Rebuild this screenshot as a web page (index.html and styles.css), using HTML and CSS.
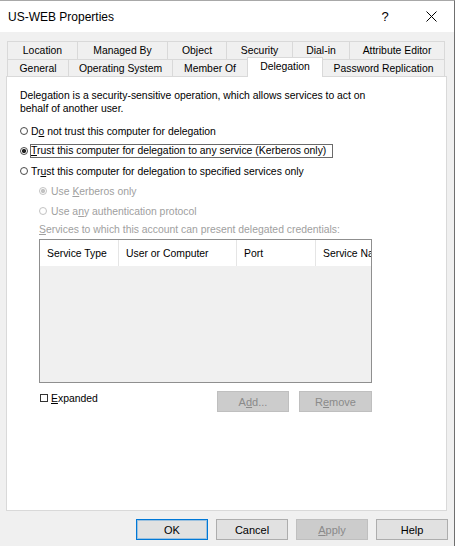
FILE: index.html
```html
<!DOCTYPE html>
<html>
<head>
<meta charset="utf-8">
<link rel="stylesheet" href="styles.css">
</head>
<body>
<div class="window">
  <div class="titlebar">
    <span class="title">US-WEB Properties</span>
    <span class="tb-btn help">?</span>
    <span class="tb-btn close"><svg width="11" height="11" viewBox="0 0 11 11"><path d="M0.5 0.5L10.5 10.5M10.5 0.5L0.5 10.5" stroke="#000" stroke-width="1" fill="none"/></svg></span>
  </div>
  <div class="tabs">
    <div class="tab-row row1">
      <div class="tab">Location</div>
      <div class="tab">Managed By</div>
      <div class="tab">Object</div>
      <div class="tab">Security</div>
      <div class="tab">Dial-in</div>
      <div class="tab">Attribute Editor</div>
    </div>
    <div class="tab-row row2">
      <div class="tab">General</div>
      <div class="tab">Operating System</div>
      <div class="tab">Member Of</div>
      <div class="tab selected">Delegation</div>
      <div class="tab">Password Replication</div>
    </div>
  </div>
  <div class="panel">
    <p class="desc">Delegation is a security-sensitive operation, which allows services to act on<br>behalf of another user.</p>
    <div class="opt"><span class="radio"></span><span>D<u>o</u> not trust this computer for delegation</span></div>
    <div class="opt"><span class="radio checked"></span><span class="focus"><u>T</u>rust this computer for delegation to any service (Kerberos only)</span></div>
    <div class="opt"><span class="radio"></span><span>Tr<u>u</u>st this computer for delegation to specified services only</span></div>
    <div class="opt sub disabled"><span class="radio checked"></span><span>Use <u>K</u>erberos only</span></div>
    <div class="opt sub disabled"><span class="radio"></span><span>Use a<u>n</u>y authentication protocol</span></div>
    <div class="list-label disabled"><u>S</u>ervices to which this account can present delegated credentials:</div>
    <div class="list">
      <div class="list-header">
        <div class="col c1">Service Type</div>
        <div class="col c2">User or Computer</div>
        <div class="col c3">Port</div>
        <div class="col c4">Service Name</div>
      </div>
    </div>
    <div class="list-footer">
      <div class="check"><span class="box"></span><span><u>E</u>xpanded</span></div>
      <div class="spacer"></div>
      <button class="btn disabled-btn">A<u>d</u>d...</button>
      <button class="btn disabled-btn">R<u>e</u>move</button>
    </div>
  </div>
  <div class="dialog-buttons">
    <button class="btn default-btn">OK</button>
    <button class="btn">Cancel</button>
    <button class="btn disabled-btn"><u>A</u>pply</button>
    <button class="btn">Help</button>
  </div>
</div>
</body>
</html>
```
FILE: styles.css
```css
* { box-sizing: border-box; }
body {
  margin: 0;
  background: #fff;
  font-family: "Liberation Sans", Arial, sans-serif;
  font-size: 10.4px;
  color: #000;
}
.window {
  width: 455px;
  height: 546px;
  border-top: 1px solid #a8a8a8;
  border-right: 1px solid #6f6f6f;
  background: #f0f0f0;
  display: flex;
  flex-direction: column;
}
.titlebar {
  height: 31px;
  background: #fff;
  display: flex;
  align-items: center;
  flex: none;
}
.title {
  flex: 1;
  padding-left: 8px;
  font-size: 12px;
}
.tb-btn {
  width: 46px;
  height: 31px;
  display: flex;
  align-items: center;
  justify-content: center;
}
.help { font-size: 13px; }
.tabs {
  margin: 9px 0 0 7px;
  width: 438px;
}
.tab-row { display: grid; }
.row1 { grid-template-columns: 70px 90px 59px 66px 57px 96px; height: 18px; }
.row2 { grid-template-columns: 61px 104px 75px 76px 122px; height: 17px; }
.tab {
  border-top: 1px solid #d9d9d9;
  border-left: 1px solid #d9d9d9;
  display: flex;
  align-items: center;
  justify-content: center;
  white-space: nowrap;
}
.tab:last-child { border-right: 1px solid #d9d9d9; }
.tab.selected {
  background: #fff;
  margin-top: -2px;
  margin-bottom: -1px;
  padding-bottom: 2px;
  border-right: 1px solid #d9d9d9;
  position: relative;
  z-index: 1;
}
.tab.selected + .tab { border-left: none; }
.panel {
  margin-left: 6px;
  width: 441px;
  height: 435px;
  border: 1px solid #d9d9d9;
  background: #fff;
  padding: 12px 0 0 13px;
  flex: none;
}
.desc {
  margin: 0 0 6px;
  line-height: 13px;
}
.opt {
  height: 20px;
  display: flex;
  align-items: center;
  white-space: nowrap;
}
.opt.sub { padding-left: 19px; }
.opt.sub .radio { margin-right: 4px; }
.radio {
  width: 8px;
  height: 8px;
  border: 1px solid #4a4a4a;
  border-radius: 50%;
  margin-right: 3px;
  background: #fff;
  flex: none;
}
.radio.checked {
  background: radial-gradient(circle, #222 0, #222 1.8px, #fff 2.4px);
}
.disabled { color: #a0a0a0; }
.disabled .radio { border-color: #c2c2c2; }
.disabled .radio.checked {
  background: radial-gradient(circle, #c2c2c2 0, #c2c2c2 1.8px, #fff 2.4px);
}
.focus {
  border: 1px solid #6a6a6a;
  margin-left: -1px;
  padding-right: 6px;
  line-height: 12px;
}
.list-label {
  height: 18px;
  line-height: 18px;
  padding-left: 19px;
}
.list {
  margin-left: 19px;
  width: 333px;
  height: 144px;
  border: 1px solid #8f8f8f;
  background: #f0f0f0;
  overflow: hidden;
}
.list-header {
  display: grid;
  grid-template-columns: 79px 118px 79px 120px;
  height: 26px;
  background: #fff;
}
.col {
  border-right: 1px solid #e5e5e5;
  padding-left: 7px;
  display: flex;
  align-items: center;
  white-space: nowrap;
  overflow: hidden;
}
.list-footer {
  margin-top: 8px;
  width: 352px;
  height: 21px;
  display: flex;
  align-items: flex-start;
  gap: 10px;
}
.check {
  margin-left: 20px;
  display: flex;
  align-items: center;
  height: 14px;
}
.box {
  width: 8px;
  height: 8px;
  border: 1px solid #333;
  background: #fff;
  margin-right: 3px;
}
.spacer { flex: 1; }
.btn {
  width: 72px;
  height: 21px;
  border: 1px solid #adadad;
  background: #e1e1e1;
  font-family: "Liberation Sans", Arial, sans-serif;
  font-size: 11px;
  color: #000;
  padding: 0;
}
.list-footer .btn:last-child { width: 73px; }
.disabled-btn {
  background: #cccccc;
  border-color: #bfbfbf;
  color: #8a8a8a;
}
.default-btn {
  border-color: #0078d7;
  box-shadow: inset 0 0 0 1px rgba(0, 120, 215, 0.3);
}
.dialog-buttons {
  display: flex;
  justify-content: flex-end;
  gap: 8px;
  margin-top: 8px;
  padding-right: 6px;
}
```
